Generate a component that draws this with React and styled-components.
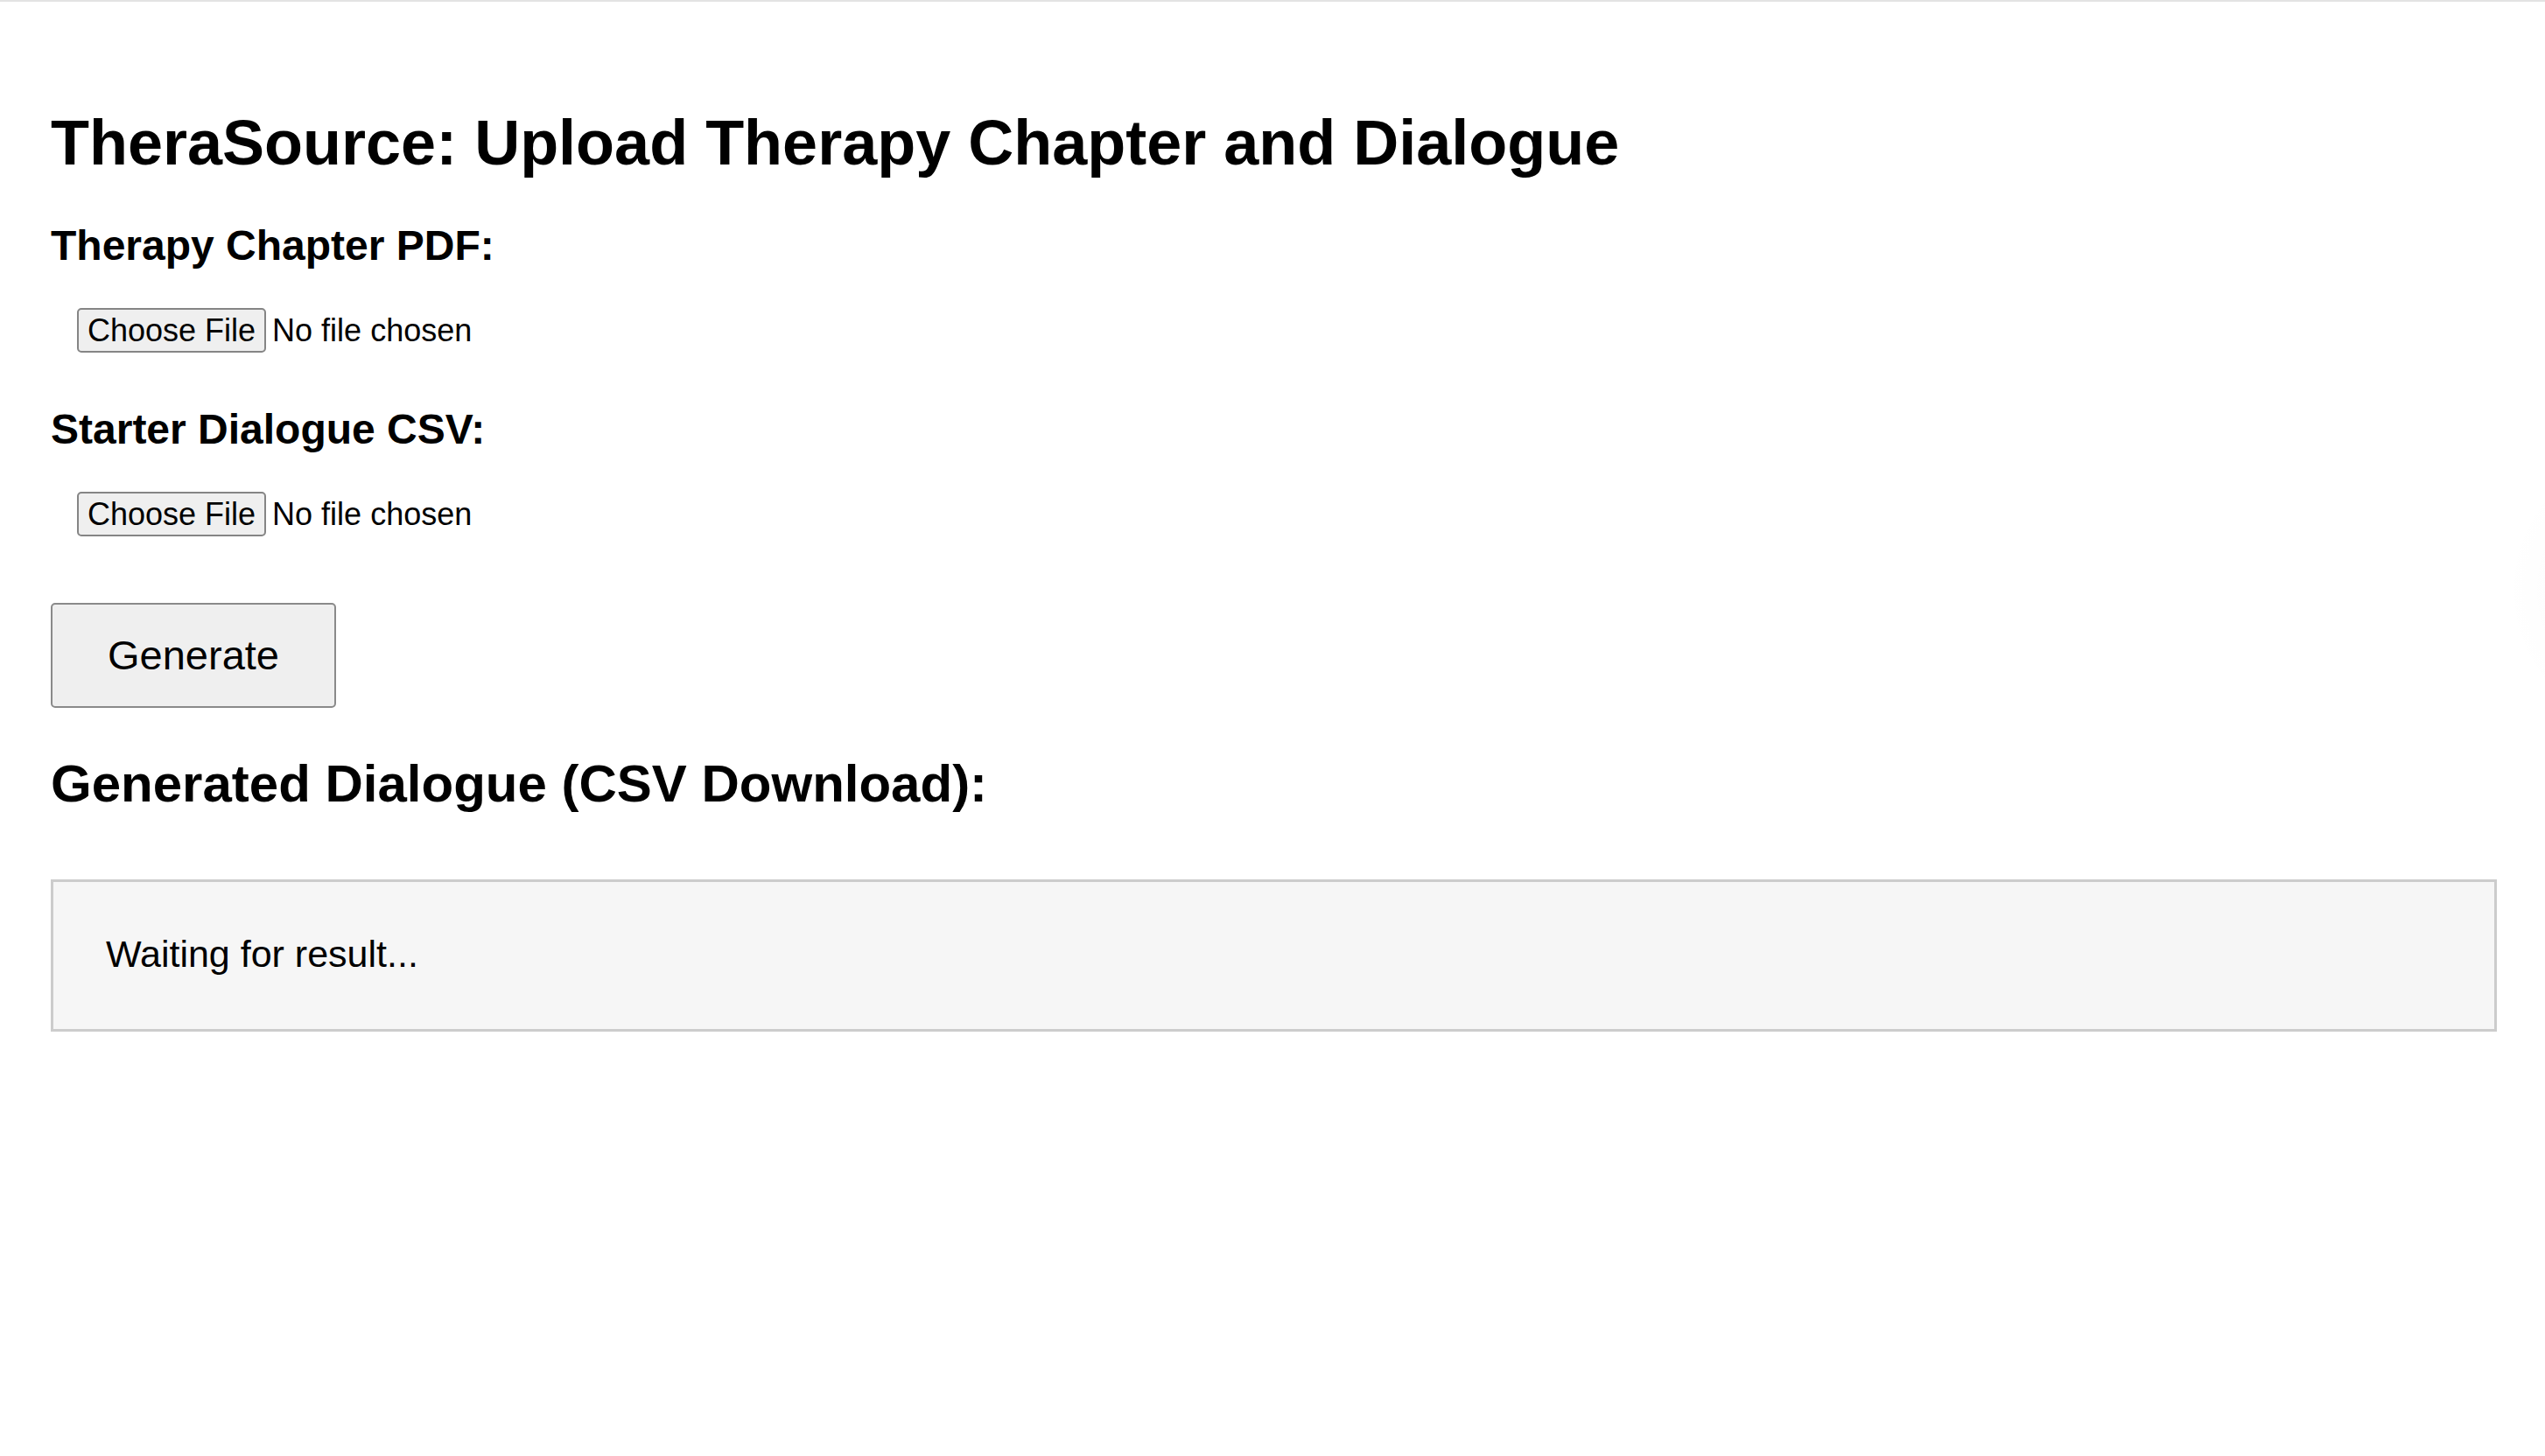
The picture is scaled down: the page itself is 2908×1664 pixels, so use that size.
import { useState } from "react";
import styled, { createGlobalStyle } from "styled-components";

const GlobalStyle = createGlobalStyle`
    * {
        box-sizing: border-box;
    }
    body {
        margin: 0;
        background-color: #fff;
        font-family: "Liberation Sans", Arial, sans-serif;
        color: #000;
        overflow-x: hidden;
    }
`;

function FileField({ label, spacing }) {
    const [fileName, setFileName] = useState("");

    return (
        <Field>
            <Label $spacing={spacing}>{label}</Label>
            <FileRow>
                <PickButton as="label">
                    Choose File
                    <HiddenInput
                        type="file"
                        onChange={(e) =>
                            setFileName(e.target.files[0] ? e.target.files[0].name : "")
                        }
                    />
                </PickButton>
                <FileName>{fileName || "No file chosen"}</FileName>
            </FileRow>
        </Field>
    );
}

export default function App() {
    return (
        <>
            <GlobalStyle />
            <Page>
                <Glow />
                <Title>TheraSource: Upload Therapy Chapter and Dialogue</Title>
                <FileField label="Therapy Chapter PDF:" spacing={48} />
                <FileField label="Starter Dialogue CSV:" spacing={60} />
                <GenerateButton type="button">Generate</GenerateButton>
                <SubTitle>Generated Dialogue (CSV Download):</SubTitle>
                <ResultBox>Waiting for result...</ResultBox>
            </Page>
        </>
    );
}

const Page = styled.div`
    position: relative;
    min-height: 1664px;
    overflow: hidden;
    border-top: 2px solid #e3e3e3;
    padding: 120px 55px 0 58px;
    display: flex;
    flex-direction: column;
    align-items: flex-start;
`;
const Glow = styled.div`
    position: absolute;
    top: 498px;
    right: -300px;
    width: 348px;
    height: 348px;
    border-radius: 50%;
    background: radial-gradient(
        circle closest-side,
        rgba(0, 0, 0, 0.03) 0%,
        rgba(0, 0, 0, 0.012) 55%,
        rgba(0, 0, 0, 0) 100%
    );
    pointer-events: none;
`;
const Title = styled.h1`
    margin: 0;
    font-size: 72px;
    font-weight: bold;
    line-height: 1.15;
`;
const Field = styled.div`
    display: flex;
    flex-direction: column;
    align-items: flex-start;
`;
const Label = styled.div`
    margin-top: ${(props) => props.$spacing}px;
    margin-bottom: 44px;
    font-size: 48px;
    font-weight: bold;
    line-height: 1.15;
`;
const FileRow = styled.div`
    display: flex;
    align-items: center;
    gap: 7px;
    margin-left: 30px;
`;
const PickButton = styled.button`
    display: flex;
    align-items: center;
    height: 51px;
    padding: 0 10px;
    border: 2px solid #858585;
    border-radius: 5px;
    background-color: #efefef;
    font-family: "Liberation Sans", Arial, sans-serif;
    font-size: 36px;
    line-height: 1.15;
    color: #000;
    cursor: default;
`;
const HiddenInput = styled.input`
    display: none;
`;
const FileName = styled.span`
    font-size: 36px;
    line-height: 1.15;
`;
const GenerateButton = styled.button`
    margin-top: 76px;
    height: 120px;
    padding: 0 63px;
    border: 2px solid #8a8a8a;
    border-radius: 5px;
    background-color: #efefef;
    font-family: "Liberation Sans", Arial, sans-serif;
    font-size: 47px;
    line-height: 1.15;
    color: #000;
`;
const SubTitle = styled.h2`
    margin: 52px 0 0;
    font-size: 60px;
    font-weight: bold;
    line-height: 1.15;
`;
const ResultBox = styled.div`
    align-self: stretch;
    margin-top: 75px;
    padding: 58px 60px 60px;
    border: 3px solid #cccccc;
    background-color: #f6f6f6;
    font-size: 43px;
    line-height: 1.15;
`;
